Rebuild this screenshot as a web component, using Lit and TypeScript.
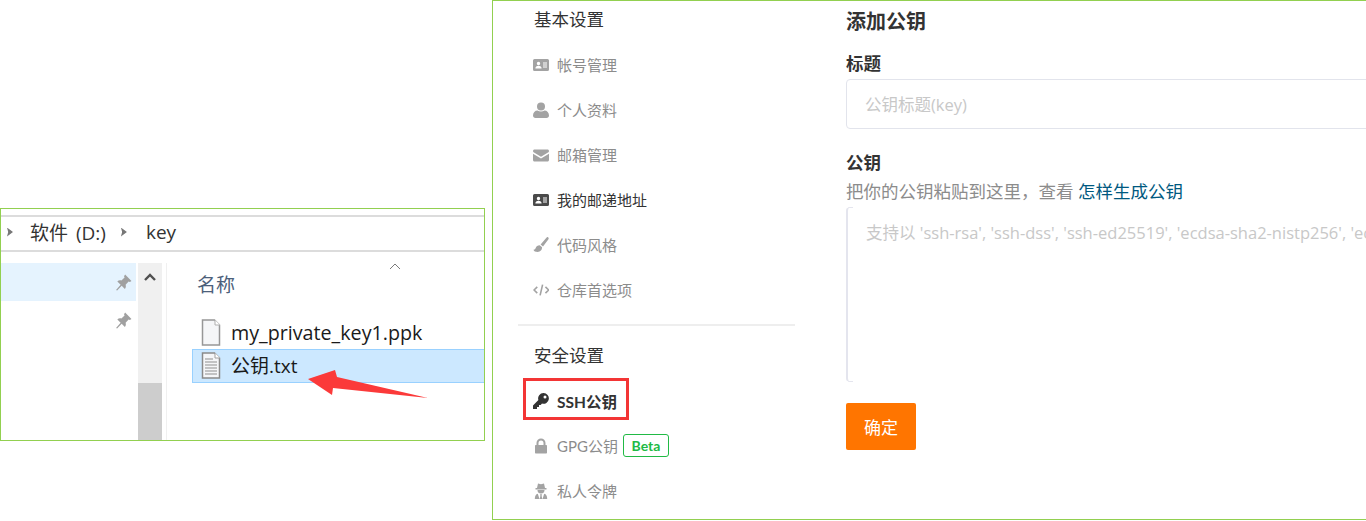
import { LitElement, html, css, svg } from 'lit';
import { customElement } from 'lit/decorators.js';

const icons: Record<string, unknown> = {
  card: svg`<path fill-rule="evenodd" d="M1.500 2h13A1.500 1.500 0 0 1 16 3.500v9a1.500 1.500 0 0 1-1.500 1.500h-13A1.500 1.500 0 0 1 0 12.500v-9A1.500 1.500 0 0 1 1.500 2zM5.500 4.800a1.700 1.700 0 1 0 0 3.400 1.700 1.700 0 0 0 0-3.400zM2.400 11.400h6.200c0-1.600-1.200-2.600-3.100-2.600s-3.100 1-3.100 2.600zM10 5.600v1h4v-1zM10 7.600v1h4v-1zM10 9.600v1h4v-1z"/>`,
  user: svg`<circle cx="8" cy="4.500" r="4"/><path d="M0 13.500c0-3 2-5 4.500-5 1 .7 2.200 1 3.500 1s2.500-.3 3.500-1c2.500 0 4.500 2 4.500 5 0 1.500-1 2.500-2.500 2.500h-11C1 16 0 15 0 13.500z"/>`,
  mail: svg`<path d="M1.500 2.500h13c.8 0 1.500.7 1.500 1.500 0 .7-.4 1.200-1 1.600L8 9.800 1 5.600C.4 5.200 0 4.700 0 4c0-.8.7-1.500 1.500-1.500zM0 6.800l8 4.800 8-4.800v6.200c0 .8-.7 1.500-1.500 1.500h-13C.7 14.500 0 13.800 0 13z"/>`,
  brush: svg`<path d="M15.300.4c.6.500.5 1.300 0 2.100L10 9.500 7.600 7.500 13.400.7c.6-.6 1.300-.8 1.900-.3zM6.700 8.300l2.400 2c0 2.700-1.700 4.700-4.500 4.700C2.500 15 .8 14 .5 12.700c1.300 0 1.900-.7 2.300-1.900.5-1.500 1.800-2.500 3.900-2.500z"/>`,
  code: svg`<path fill="none" stroke="currentColor" stroke-width="1.800" d="M4.800 4.500 1.200 8l3.600 3.500M14 4.500 17.600 8 14 11.500M10.800 2 8 14"/>`,
  key: svg`<path fill-rule="evenodd" d="M10.600 0a5.400 5.400 0 1 1-1.600 10.600L7.700 12H6v2H4v2H0v-3.500l5.400-5.400A5.400 5.400 0 0 1 10.600 0zM12 2.500a1.500 1.500 0 1 0 0 3 1.500 1.500 0 0 0 0-3z"/>`,
  lock: svg`<path fill-rule="evenodd" d="M8 .5a4.500 4.500 0 0 1 4.500 4.500v2h.5c.6 0 1 .4 1 1v6.500c0 .6-.4 1-1 1H3c-.6 0-1-.4-1-1V8c0-.6.4-1 1-1h.5V5A4.500 4.500 0 0 1 8 .5zm0 2a2.500 2.500 0 0 0-2.500 2.500v2h5V5A2.500 2.500 0 0 0 8 2.500z"/>`,
  secret: svg`<path fill-rule="evenodd" d="M5 .5 8 1.300 11 .5l1 4.500h1.500v1.500h-11V5H4zM4.500 7h7c.2 2-1 3.400-3.500 3.400S4.300 9 4.500 7zM1.800 16c0-3 1-4.800 3-5.200L6.500 16zM14.200 16c0-3-1-4.800-3-5.200L9.500 16zM7 11.200h2l-.4 1.500.7 3.300H6.700l.7-3.300z"/>`,
};

const pinPath = svg`<path d="M9.500.5 15.500 6.500 14 7.500 12.800 7 10 10.200c.5 1.500.2 2.800-.7 3.800L6.300 11 2 15.500 1 15l4.300-5L2.200 7C3.200 6 4.700 5.700 6 6.200L9 3.300 8.500 2z"/>`;

interface Item {
  icon: string;
  label: string;
  cls?: string;
  badge?: string;
}

const basic: Item[] = [
  { icon: 'card', label: '帐号管理' },
  { icon: 'user', label: '个人资料' },
  { icon: 'mail', label: '邮箱管理' },
  { icon: 'card', label: '我的邮递地址', cls: 'dark' },
  { icon: 'brush', label: '代码风格' },
  { icon: 'code', label: '仓库首选项' },
];

const security: Item[] = [
  { icon: 'key', label: 'SSH公钥', cls: 'active' },
  { icon: 'lock', label: 'GPG公钥', badge: 'Beta' },
  { icon: 'secret', label: '私人令牌' },
];

@customElement('app-root')
export class AppRoot extends LitElement {
  static styles = css`
    :host {
      display: flex;
      align-items: flex-start;
      gap: 7px;
      height: 521px;
      overflow: hidden;
      background: #fff;
      font-family: Lato, 'Noto Sans CJK SC', sans-serif;
    }

    /* explorer crop */
    .explorer {
      position: relative;
      flex: none;
      box-sizing: border-box;
      width: 485px;
      height: 233px;
      margin-top: 208px;
      border: 1px solid #92d050;
      font-family: 'Open Sans', 'Noto Sans CJK SC', sans-serif;
      color: #222;
      display: flex;
      flex-direction: column;
    }
    .crumbs {
      box-sizing: border-box;
      height: 37px;
      margin-top: 6px;
      border-top: 2px solid #dcdcdc;
      border-bottom: 2px solid #dcdcdc;
      display: flex;
      align-items: center;
      font-size: 19px;
      color: #333;
      padding: 0 0 3px 6px;
    }
    .crumbs .sep {
      flex: none;
      width: 6px;
      height: 9px;
      background: #777;
      clip-path: polygon(0 0, 100% 50%, 0 100%, 20% 50%);
    }
    .crumbs .drive {
      margin: 0 15px 0 17px;
      word-spacing: 3px;
    }
    .crumbs .key {
      margin-left: 19px;
    }
    .panes {
      flex: 1;
      min-height: 0;
      margin-top: 11px;
      display: flex;
    }
    .nav {
      flex: none;
      width: 135px;
      display: flex;
      flex-direction: column;
    }
    .nav div {
      height: 38px;
      display: flex;
      align-items: center;
      justify-content: flex-end;
      padding-right: 4px;
      box-sizing: border-box;
    }
    .nav .hl {
      background: #e5f3fe;
    }
    .pin {
      width: 17px;
      height: 17px;
      fill: #a0a0a0;
    }
    .scroll {
      flex: none;
      width: 24px;
      margin-left: 2px;
      background: #f0f0f0;
      display: flex;
      flex-direction: column;
      justify-content: space-between;
    }
    .scroll .up {
      height: 30px;
      display: flex;
      align-items: center;
      justify-content: center;
    }
    .scroll .up svg {
      width: 12px;
      height: 8px;
      margin-top: -2px;
    }
    .scroll .thumb {
      height: 57px;
      background: #cdcdcd;
    }
    .files {
      flex: 1;
      margin-left: 4px;
      border-left: 1px solid #f0f0f0;
      padding-left: 24px;
      position: relative;
    }
    .sort {
      position: absolute;
      left: 222px;
      top: 0;
      width: 12px;
      height: 7px;
    }
    .head {
      font-size: 19px;
      color: #4c607a;
      margin: 11px 0 0 6px;
      line-height: 22px;
    }
    .rows {
      margin: 20px 0 0 1px;
    }
    .file {
      display: flex;
      align-items: center;
      gap: 10px;
      height: 33px;
      font-size: 19.700px;
      color: #1a1a1a;
      box-sizing: border-box;
      padding-left: 9px;
    }
    .file.sel {
      background: #cce8ff;
      border: 1px solid #99d1ff;
      border-right: none;
      padding: 0 0 2px 8px;
      height: 34px;
      font-size: 19px;
    }
    .file svg {
      width: 20px;
      height: 27px;
      flex: none;
    }
    .arrow {
      position: absolute;
      left: 299px;
      top: 154px;
      width: 135px;
      height: 40px;
    }

    /* settings crop */
    .settings {
      flex: 1;
      min-width: 0;
      box-sizing: border-box;
      height: 520px;
      border: 1px solid #92d050;
      border-right: none;
      display: flex;
      overflow: hidden;
    }
    .side {
      flex: none;
      width: 277px;
      margin-left: 25px;
      display: flex;
      flex-direction: column;
    }
    .side h3 {
      margin: 0;
      padding-left: 16px;
      font-size: 17.500px;
      font-weight: 400;
      color: #333;
      line-height: 24px;
    }
    .side h3.first {
      margin-top: 7px;
      margin-bottom: 10px;
    }
    .side h3.second {
      margin-top: 17px;
      margin-bottom: 10px;
    }
    .side hr {
      margin: 12px 0 1px;
      border: none;
      height: 2px;
      background: #eee;
    }
    .row {
      position: relative;
      display: flex;
      align-items: center;
      height: 45px;
      padding-left: 15px;
      font-size: 15px;
      color: #8c8c8c;
    }
    .row svg {
      flex: none;
      width: 16px;
      height: 16px;
      margin-right: 8px;
      fill: #a3a3a3;
      color: #a3a3a3;
    }
    .row.dark {
      color: #333;
    }
    .row.dark svg {
      fill: #4a4a4a;
    }
    .row.active {
      color: #333;
      font-weight: 700;
      font-size: 15.500px;
    }
    .row.active svg {
      fill: #333;
    }
    .row.active::after {
      content: '';
      position: absolute;
      left: 5px;
      top: 0;
      width: 106px;
      height: 42px;
      box-sizing: border-box;
      border: 3px solid #f33535;
    }
    .badge {
      margin-left: 5px;
      box-sizing: border-box;
      height: 23px;
      width: 46px;
      border: 1px solid #21ba45;
      border-radius: 3px;
      color: #21ba45;
      font-size: 14px;
      font-weight: 700;
      display: flex;
      align-items: center;
      justify-content: center;
    }
    .main {
      flex: none;
      width: 1000px;
      margin-left: 51px;
      color: #333;
    }
    .main h2 {
      margin: 8px 0 0;
      font-size: 20px;
      line-height: 24px;
      font-weight: 700;
    }
    .main label {
      display: block;
      font-size: 17.500px;
      line-height: 24px;
      font-weight: 700;
    }
    .lb-title {
      margin-top: 19px;
    }
    .lb-key {
      margin-top: 22px;
    }
    input,
    textarea {
      display: block;
      box-sizing: border-box;
      width: 100%;
      margin: 0;
      border: 1px solid #e2e4ec;
      border-radius: 4px;
      background: #fff;
      outline: none;
      font: 16.500px 'Open Sans', 'Noto Sans CJK SC', sans-serif;
      color: #333;
      padding: 0 18px;
      resize: none;
    }
    input::placeholder,
    textarea::placeholder {
      color: #c8c8c8;
      opacity: 1;
    }
    input {
      height: 50px;
      margin-top: 3px;
    }
    .help {
      font-size: 17.500px;
      line-height: 24px;
      margin-top: 5px;
      color: #8c8c8c;
    }
    .help a {
      color: #005980;
      text-decoration: none;
    }
    textarea {
      height: 175px;
      margin-top: 3px;
      padding-top: 12px;
      border-color: transparent;
      border-left: 2px solid #e4e5ee;
      border-radius: 4px 0 0 4px;
      background-image: linear-gradient(#e4e5ee, #e4e5ee), linear-gradient(#e4e5ee, #e4e5ee);
      background-size: 6px 1px;
      background-repeat: no-repeat;
      background-position: left -1px top -1px, left -1px bottom -1px;
      background-origin: padding-box;
      background-clip: border-box;
    }
    button {
      display: block;
      margin-top: 21px;
      width: 70px;
      height: 47px;
      border: none;
      border-radius: 2px;
      background: #ff7500;
      color: #fff;
      font: 17px Lato, 'Noto Sans CJK SC', sans-serif;
      padding: 0;
    }
  `;

  renderRow(item: Item) {
    return html`
      <div class="row ${item.cls ?? ''}">
        <svg viewBox="0 0 ${item.icon === 'code' ? 18 : 16} 16">${icons[item.icon]}</svg>
        <span>${item.label}</span>
        ${item.badge ? html`<span class="badge">${item.badge}</span>` : ''}
      </div>
    `;
  }

  render() {
    const pin = html`<svg class="pin" viewBox="0 0 16 16">${pinPath}</svg>`;
    return html`
      <section class="explorer">
        <div class="crumbs">
          <span class="sep"></span>
          <span class="drive">软件 (D:)</span>
          <span class="sep"></span>
          <span class="key">key</span>
        </div>
        <div class="panes">
          <div class="nav">
            <div class="hl">${pin}</div>
            <div>${pin}</div>
          </div>
          <div class="scroll">
            <div class="up">
              <svg viewBox="0 0 12 8"><path fill="none" stroke="#505050" stroke-width="2.400" d="M1 7l5-5 5 5" /></svg>
            </div>
            <div class="thumb"></div>
          </div>
          <div class="files">
            <svg class="sort" viewBox="0 0 12 7"><path fill="none" stroke="#7a7a7a" d="M1 6l5-5 5 5" /></svg>
            <div class="head">名称</div>
            <div class="rows">
              <div class="file">
                <svg viewBox="0 0 20 27">
                  <path fill="#f5f6f8" stroke="#979797" stroke-width="1.500" d="M1.500 1h12l5 5v20h-17z" />
                  <path fill="#fff" stroke="#b0b0b0" d="M14 1v5h5" />
                </svg>
                my_private_key1.ppk
              </div>
              <div class="file sel">
                <svg viewBox="0 0 20 27">
                  <path fill="#f5f6f8" stroke="#8a8a8a" stroke-width="1.500" d="M1.500 1h12l5 5v20h-17z" />
                  <path fill="#fff" stroke="#a0a0a0" d="M14 1v5h5" />
                  <path stroke="#8f8f8f" d="M4 7h8M4 10h12M4 13h12M4 16h12M4 19h12M4 22h12" />
                </svg>
                公钥.txt
              </div>
            </div>
          </div>
        </div>
        <svg class="arrow" viewBox="0 0 135 40">
          <path fill="#fb3a3a" d="M8 16 35 7 37 14 128 35 33 25 32 32z" />
        </svg>
      </section>

      <section class="settings">
        <nav class="side">
          <h3 class="first">基本设置</h3>
          ${basic.map((item) => this.renderRow(item))}
          <hr />
          <h3 class="second">安全设置</h3>
          ${security.map((item) => this.renderRow(item))}
        </nav>
        <div class="main">
          <h2>添加公钥</h2>
          <label class="lb-title">标题</label>
          <input placeholder="公钥标题(key)" />
          <label class="lb-key">公钥</label>
          <div class="help">把你的公钥粘贴到这里，查看 <a href="#">怎样生成公钥</a></div>
          <textarea placeholder="支持以 'ssh-rsa', 'ssh-dss', 'ssh-ed25519', 'ecdsa-sha2-nistp256', 'ecdsa-sha2-nistp384', or 'ecdsa-sha2-nistp521' 开头"></textarea>
          <button>确定</button>
        </div>
      </section>
    `;
  }
}
